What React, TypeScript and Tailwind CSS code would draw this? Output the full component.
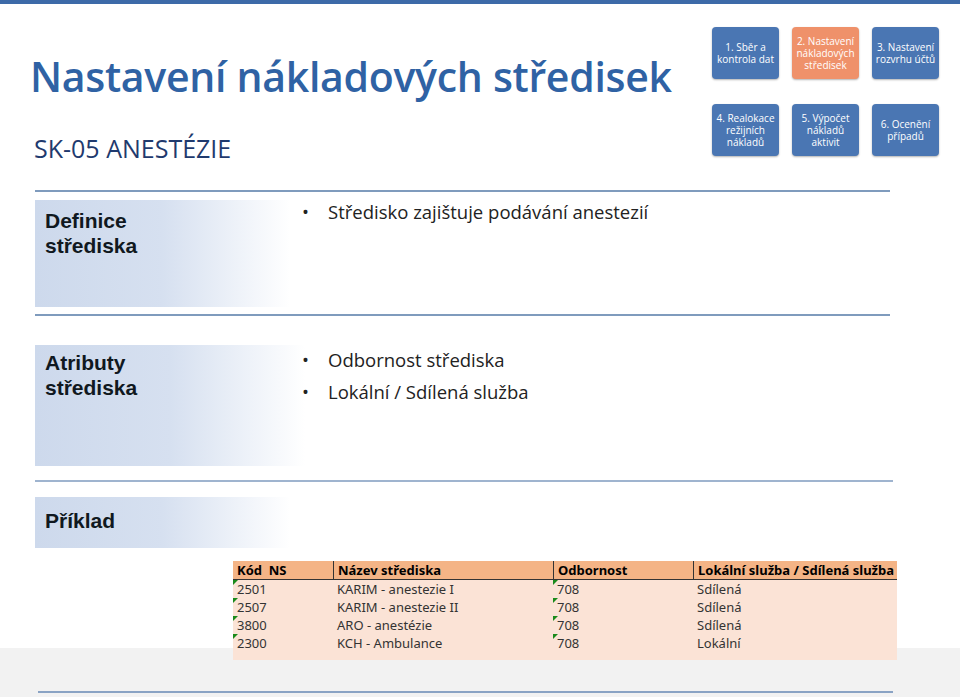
import React from "react";

const navs = [
  { t: "1. Sběr a kontrola dat", o: false },
  { t: "2. Nastavení nákladových středisek", o: true },
  { t: "3. Nastavení rozvrhu účtů", o: false },
  { t: "4. Realokace režijních nákladů", o: false },
  { t: "5. Výpočet nákladů aktivit", o: false },
  { t: "6. Ocenění případů", o: false },
];

const rows = [
  ["2501", "KARIM - anestezie I", "708", "Sdílená"],
  ["2507", "KARIM - anestezie II", "708", "Sdílená"],
  ["3800", "ARO - anestézie", "708", "Sdílená"],
  ["2300", "KCH - Ambulance", "708", "Lokální"],
];

const Tri = () => (
  <span className="absolute left-0 top-0 w-0 h-0 border-t-[5px] border-t-[#1a8a1a] border-r-[5px] border-r-transparent" />
);

export default function App() {
  const sans = { fontFamily: "'Open Sans', 'Noto Sans', sans-serif" };
  return (
    <div className="relative w-[960px] h-[697px] bg-white overflow-hidden" style={sans}>
      <div className="h-[4px] bg-[#3d6aa8]" />
      <div className="flex">
        <div className="pl-[30px] pt-[44px] w-[700px]">
          <div className="text-[#2f62a4] text-[41px] leading-[56px] font-semibold tracking-[-0.3px]">Nastavení nákladových středisek</div>
          <div className="pl-[4px] mt-[28px] text-[#1f3a6e] text-[25px] leading-[32px]">SK-05 ANESTÉZIE</div>
        </div>
        <div className="grid grid-cols-[67px_67px_67px] gap-x-[13px] gap-y-[16px] pt-[23px] pl-[12px]">
          {navs.map((n) => (
            <div
              key={n.t}
              className={`h-[52px] rounded-[4px] flex items-center justify-center text-center text-white text-[10px] leading-[12px] px-[2px] shadow-[0_1px_2px_rgba(0,0,0,0.3)] ${n.o ? "bg-[#ef916a]" : "bg-[#4a76b3]"}`}
            >
              {n.t}
            </div>
          ))}
        </div>
      </div>

      <div className="ml-[35px] w-[855px] mt-[26px] border-t-[2px] border-[#7f9bbd]" />
      <div className="ml-[35px] mt-[8px] flex h-[107px]">
        <div className="w-[255px] bg-gradient-to-r from-[#cdd9ec] via-[#d6e0f0] to-white pl-[10px] pt-[8px] text-[21px] leading-[25px] font-bold text-[#101820]" style={{ fontFamily: "'Liberation Sans', sans-serif" }}>
          Definice<br />střediska
        </div>
        <div className="pl-[12px] text-[18.5px] leading-[24px] text-[#222] flex">
          <span className="w-[26px]">•</span>Středisko zajištuje podávání anestezií
        </div>
      </div>
      <div className="ml-[35px] w-[855px] mt-[7px] border-t-[2px] border-[#7f9bbd]" />

      <div className="ml-[35px] mt-[29px] flex h-[121px]">
        <div className="w-[270px] bg-gradient-to-r from-[#cdd9ec] via-[#d6e0f0] to-white pl-[10px] pt-[5px] text-[21px] leading-[25px] font-bold text-[#101820]" style={{ fontFamily: "'Liberation Sans', sans-serif" }}>
          Atributy<br />střediska
        </div>
        <div className="-ml-[3px] text-[18.5px] leading-[32px] text-[#222] -mt-[1px]">
          <div className="flex"><span className="w-[26px]">•</span>Odbornost střediska</div>
          <div className="flex"><span className="w-[26px]">•</span>Lokální / Sdílená služba</div>
        </div>
      </div>
      <div className="ml-[35px] w-[858px] mt-[14px] border-t-[2px] border-[#9fb4cf]" />

      <div className="ml-[35px] mt-[15px] w-[255px] h-[51px] bg-gradient-to-r from-[#cdd9ec] via-[#d6e0f0] to-white pl-[10px] pt-[8px] text-[21px] font-bold text-[#101820]" style={{ fontFamily: "'Liberation Sans', sans-serif" }}>
        Příklad
      </div>

      <div className="relative z-10 ml-[233px] mt-[13px] w-[664px] text-[13px] text-[#333]" style={{ fontFamily: "'Noto Sans', sans-serif" }}>
        <div className="grid grid-cols-[100px_220px_140px_204px] h-[19px] bg-[#f4b486] font-bold text-black border-b border-[#333] leading-[18px]">
          {["Kód  NS", "Název střediska", "Odbornost", "Lokální služba / Sdílená služba"].map((h, i) => (
            <div key={i} className={`pl-[4px] whitespace-pre overflow-hidden ${i > 0 ? "border-l border-[#333]" : ""}`}>{h}</div>
          ))}
        </div>
        <div className="bg-[#fbe3d6] pb-[8px]">
          {rows.map((r) => (
            <div key={r[0]} className="grid grid-cols-[100px_220px_140px_204px] h-[18px] leading-[18px]">
              <div className="relative pl-[4px]"><Tri />{r[0]}</div>
              <div className="pl-[4px]">{r[1]}</div>
              <div className="relative pl-[4px]"><Tri />{r[2]}</div>
              <div className="pl-[4px]">{r[3]}</div>
            </div>
          ))}
        </div>
      </div>

      <div className="absolute left-0 right-0 bottom-0 h-[49px] bg-[#f2f2f2]">
        <div className="ml-[38px] w-[855px] mt-[43px] border-t-[2px] border-[#8aa3c4]" />
      </div>
    </div>
  );
}
